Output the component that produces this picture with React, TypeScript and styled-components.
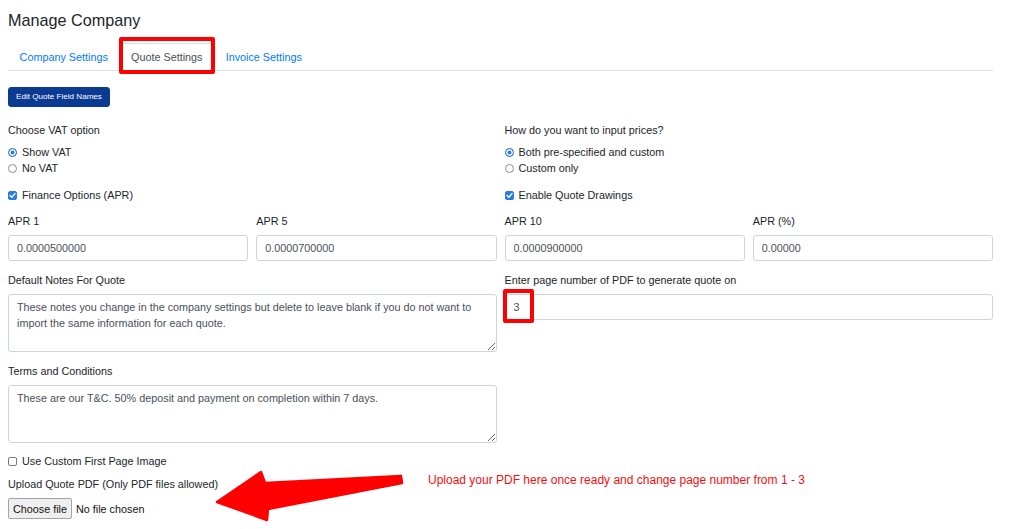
import React from "react";
import styled, { createGlobalStyle } from "styled-components";

const GlobalStyle = createGlobalStyle`
  html, body { margin: 0; padding: 0; background: #fff; }
  body {
    font-family: "Liberation Sans", Arial, Helvetica, sans-serif;
    font-size: 10.8px;
    color: #212529;
  }
  * { box-sizing: border-box; }
`;

const Page = styled.div`
  position: relative;
  width: 993px;
  height: 529px;
  padding: 11px 0 0 8px;
  overflow: hidden;
`;

const Title = styled.h1`
  margin: 0 0 13px;
  font-size: 16.2px;
  font-weight: 400;
  line-height: 19px;
  color: #212529;
`;

const Tabs = styled.nav`
  display: flex;
  border-bottom: 1px solid #dee2e6;
`;

const Tab = styled.div<{ $active?: boolean }>`
  position: relative;
  margin-bottom: -1px;
  padding: 5px 10.6px;
  line-height: 16px;
  font-size: 10.8px;
  border: 1px solid transparent;
  border-radius: 4px 4px 0 0;
  color: ${(p) => (p.$active ? "#495057" : "#007bff")};
  background: ${(p) => (p.$active ? "#fff" : "transparent")};
  border-color: ${(p) => (p.$active ? "#dee2e6 #dee2e6 #fff" : "transparent")};
`;

const HighlightBox = styled.span<{ $t: number; $r: number; $b: number; $l: number }>`
  position: absolute;
  top: ${(p) => p.$t}px;
  right: ${(p) => p.$r}px;
  bottom: ${(p) => p.$b}px;
  left: ${(p) => p.$l}px;
  border: 4px solid #ff0000;
  border-radius: 2px;
  pointer-events: none;
`;

const ActionBar = styled.div`
  margin-top: 16px;
  display: flex;
`;

const PrimaryButton = styled.button`
  height: 20px;
  padding: 0 7px;
  border: 1px solid #0b3a92;
  border-radius: 3px;
  background: #0b3a92;
  color: #fff;
  font-family: inherit;
  font-size: 8.1px;
  line-height: 12px;
`;

const TwoCols = styled.div<{ $mt: number }>`
  display: grid;
  grid-template-columns: 1fr 1fr;
  column-gap: 8px;
  margin-top: ${(p) => p.$mt}px;
`;

const FourCols = styled.div<{ $mt: number }>`
  display: grid;
  grid-template-columns: repeat(4, 1fr);
  column-gap: 8px;
  margin-top: ${(p) => p.$mt}px;
`;

const Group = styled.div<{ $mb?: number }>`
  display: flex;
  flex-direction: column;
  margin-bottom: ${(p) => p.$mb ?? 0}px;
`;

const HalfGroup = styled(Group)<{ $mt: number }>`
  width: 489px;
  margin-top: ${(p) => p.$mt}px;
`;

const Label = styled.div`
  line-height: 16px;
  margin-bottom: 6px;
  color: #212529;
`;

const OptionRow = styled.label<{ $mt?: number }>`
  display: flex;
  align-items: center;
  gap: 5px;
  height: 16px;
  line-height: 16px;
  margin-top: ${(p) => p.$mt ?? 0}px;
  color: #212529;
`;

const RadioDot = styled.span<{ $on?: boolean }>`
  width: 9px;
  height: 9px;
  border-radius: 50%;
  flex: none;
  border: 1px solid ${(p) => (p.$on ? "#2a7be6" : "#8c8c8c")};
  background: ${(p) => (p.$on ? "#2a7be6" : "#fff")};
  box-shadow: ${(p) => (p.$on ? "inset 0 0 0 1.5px #fff" : "none")};
`;

const CheckSquare = styled.span<{ $on?: boolean }>`
  width: 9px;
  height: 9px;
  border-radius: 2px;
  flex: none;
  display: flex;
  align-items: center;
  justify-content: center;
  border: 1px solid ${(p) => (p.$on ? "#2a7be6" : "#7a7a7a")};
  background: ${(p) => (p.$on ? "#2a7be6" : "#fff")};
`;

const TextInput = styled.input`
  width: 100%;
  height: 26px;
  padding: 0 8px;
  border: 1px solid #ced4da;
  border-radius: 3px;
  font-family: inherit;
  font-size: 10.8px;
  color: #495057;
  background: #fff;
  outline: none;
`;

const TextArea = styled.textarea`
  width: 100%;
  height: 58px;
  padding: 4px 6px 4px 8px;
  border: 1px solid #ced4da;
  border-radius: 3px;
  font-family: inherit;
  font-size: 10.8px;
  line-height: 16px;
  color: #495057;
  background: #fff;
  resize: vertical;
  outline: none;
`;

const InputWrap = styled.div`
  position: relative;
`;

const FileRow = styled.div`
  display: flex;
  align-items: center;
  gap: 4px;
  color: #111;
`;

const FileButton = styled.button`
  height: 21px;
  width: 64px;
  padding: 0;
  border: 1px solid #a3a3a3;
  border-radius: 2px;
  background: #efefef;
  font-family: inherit;
  font-size: 10.8px;
  color: #111;
`;

const Note = styled.div`
  position: absolute;
  left: 428px;
  top: 472px;
  font-size: 12px;
  line-height: 16px;
  color: #f50f0f;
  white-space: nowrap;
`;

const ArrowSvg = styled.svg`
  position: absolute;
  left: 200px;
  top: 460px;
  width: 220px;
  height: 69px;
  overflow: visible;
`;

const Check = ({ on }: { on?: boolean }) => (
  <CheckSquare $on={on}>
    {on && (
      <svg width="7" height="7" viewBox="0 0 7 7">
        <path d="M1 3.6 L2.8 5.3 L6 1.6" fill="none" stroke="#fff" strokeWidth="1.4" strokeLinecap="round" strokeLinejoin="round" />
      </svg>
    )}
  </CheckSquare>
);

const aprs = [
  { label: "APR 1", value: "0.0000500000" },
  { label: "APR 5", value: "0.0000700000" },
  { label: "APR 10", value: "0.0000900000" },
  { label: "APR (%)", value: "0.00000" },
];

export default function App() {
  return (
    <>
      <GlobalStyle />
      <Page>
        <Title>Manage Company</Title>
        <Tabs>
          <Tab>Company Settings</Tab>
          <Tab $active>
            Quote Settings
            <HighlightBox $t={-7} $r={-2} $b={-4} $l={-1} />
          </Tab>
          <Tab>Invoice Settings</Tab>
        </Tabs>
        <ActionBar>
          <PrimaryButton>Edit Quote Field Names</PrimaryButton>
        </ActionBar>

        <TwoCols $mt={15}>
          <div>
            <Group $mb={11}>
              <Label>Choose VAT option</Label>
              <OptionRow><RadioDot $on />Show VAT</OptionRow>
              <OptionRow><RadioDot />No VAT</OptionRow>
            </Group>
            <OptionRow><Check on />Finance Options (APR)</OptionRow>
          </div>
          <div>
            <Group $mb={11}>
              <Label>How do you want to input prices?</Label>
              <OptionRow><RadioDot $on />Both pre-specified and custom</OptionRow>
              <OptionRow><RadioDot />Custom only</OptionRow>
            </Group>
            <OptionRow><Check on />Enable Quote Drawings</OptionRow>
          </div>
        </TwoCols>

        <FourCols $mt={10}>
          {aprs.map((a) => (
            <Group key={a.label}>
              <Label>{a.label}</Label>
              <TextInput readOnly value={a.value} />
            </Group>
          ))}
        </FourCols>

        <TwoCols $mt={11}>
          <Group>
            <Label>Default Notes For Quote</Label>
            <TextArea
              readOnly
              value="These notes you change in the company settings but delete to leave blank if you do not want to import the same information for each quote."
            />
          </Group>
          <Group>
            <Label>Enter page number of PDF to generate quote on</Label>
            <InputWrap>
              <TextInput readOnly value="3" />
              <HighlightBox $t={-5} $r={459} $b={-3} $l={-2} />
            </InputWrap>
          </Group>
        </TwoCols>

        <HalfGroup $mt={11}>
          <Label>Terms and Conditions</Label>
          <TextArea readOnly value="These are our T&C. 50% deposit and payment on completion within 7 days." />
        </HalfGroup>

        <OptionRow $mt={10}><Check />Use Custom First Page Image</OptionRow>

        <HalfGroup $mt={7}>
          <Label>Upload Quote PDF (Only PDF files allowed)</Label>
          <FileRow>
            <FileButton>Choose file</FileButton>
            <span>No file chosen</span>
          </FileRow>
        </HalfGroup>

        <ArrowSvg viewBox="0 0 220 69">
          <polygon
            points="17,42 61,12 65,23 201,16 202,23 68,49 67,60"
            fill="#ff0000"
            stroke="#ff0000"
            strokeWidth="2.5"
            strokeLinejoin="round"
          />
        </ArrowSvg>
        <Note>Upload your PDF here once ready and change page number from 1 - 3</Note>
      </Page>
    </>
  );
}
